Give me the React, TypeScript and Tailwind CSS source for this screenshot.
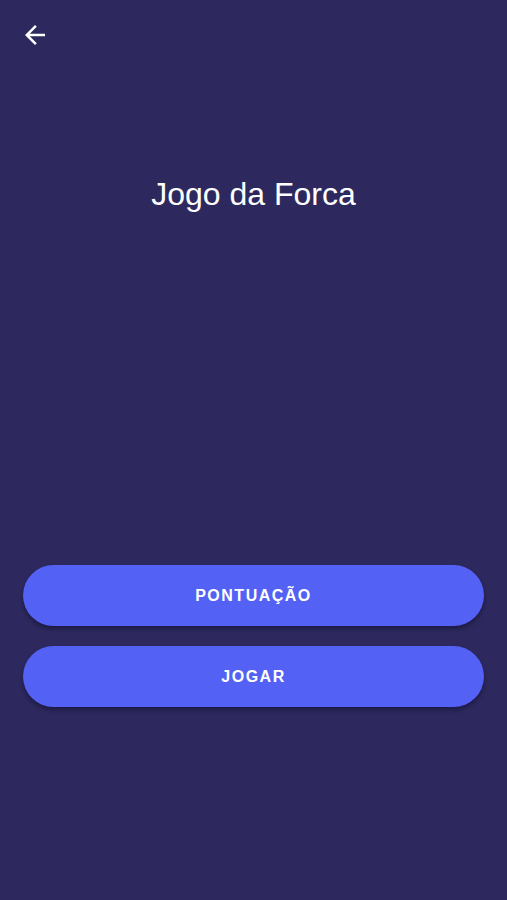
function BackIcon() {
  return (
    <svg width="30" height="30" viewBox="0 0 24 24" fill="white" aria-hidden="true">
      <path d="M20 11H7.83l5.59-5.59L12 4l-8 8 8 8 1.41-1.41L7.83 13H20v-2z" />
    </svg>
  )
}

function MenuButton({ label }: { label: string }) {
  return (
    <button className="h-[61px] w-full rounded-full bg-[#5461f5] text-white text-[16px] font-bold tracking-[1.5px] shadow-[0_3px_4px_rgba(10,8,40,0.45)]">
      {label}
    </button>
  )
}

export default function App() {
  return (
    <div className="h-[900px] w-full bg-[#2d295e] flex flex-col font-['Liberation_Sans',Arial,sans-serif]">
      <div className="pl-5 pt-5">
        <button className="block" aria-label="Voltar">
          <BackIcon />
        </button>
      </div>

      <h1 className="mt-[125px] text-center text-white text-[32px] leading-[38px]">Jogo da Forca</h1>

      <div className="mt-[352px] px-[23px] flex flex-col gap-5">
        <MenuButton label="PONTUAÇÃO" />
        <MenuButton label="JOGAR" />
      </div>
    </div>
  )
}
